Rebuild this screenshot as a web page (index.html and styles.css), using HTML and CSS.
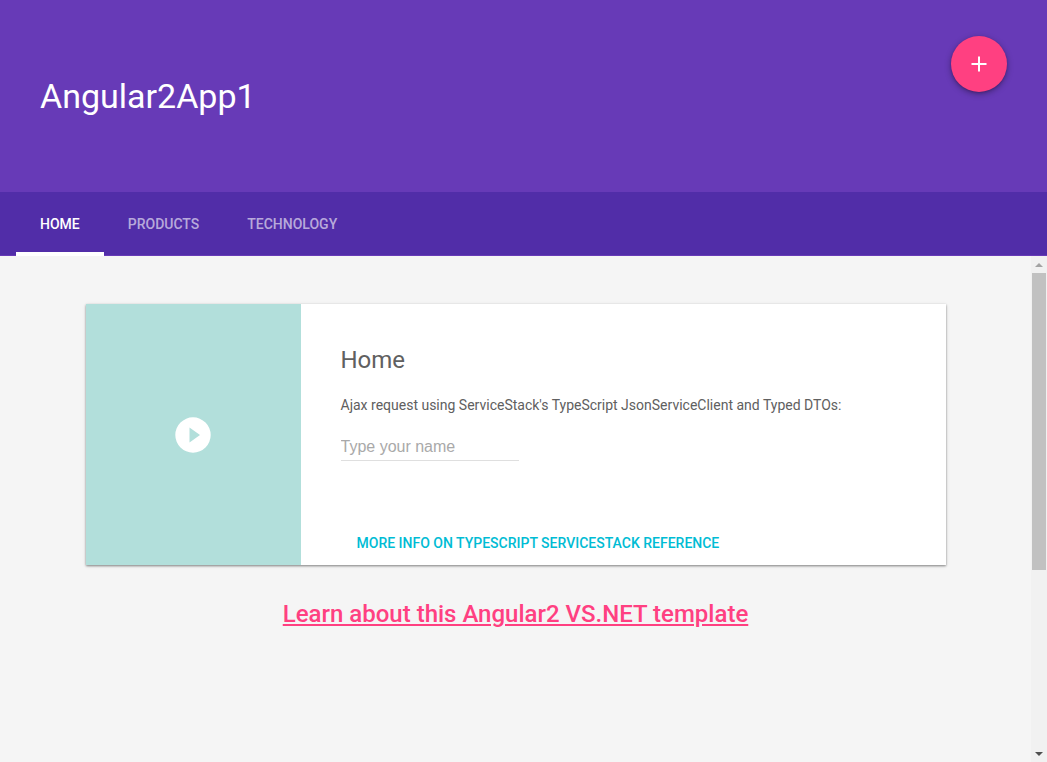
FILE: index.html
```html
<!DOCTYPE html>
<html lang="en">
<head>
<meta charset="utf-8">
<meta name="viewport" content="width=device-width, initial-scale=1">
<title>Angular2App1</title>
<link rel="stylesheet" href="styles.css">
</head>
<body>
<div class="layout">
  <header class="header">
    <h1 class="title">Angular2App1</h1>
    <button class="fab" type="button" aria-label="Add">
      <svg viewBox="0 0 24 24" width="24" height="24" aria-hidden="true"><path fill="currentColor" d="M19.500 13H13v6.500h-2V13H4.500v-2H11V4.500h2V11h6.500z"/></svg>
    </button>
  </header>
  <nav class="tabs">
    <a class="tab tab-active" href="#home">HOME</a>
    <a class="tab" href="#products">PRODUCTS</a>
    <a class="tab" href="#technology">TECHNOLOGY</a>
  </nav>
  <div class="viewport">
    <main class="content">
      <section class="card" id="home">
        <div class="media">
          <svg viewBox="0 0 36 36" width="36" height="36" aria-hidden="true"><path fill="#fff" fill-rule="evenodd" d="M18 0.300a17.700 17.700 0 1 0 0 35.400 17.700 17.700 0 0 0 0-35.400zM14.500 10.500v15l10.500-7.500z"/></svg>
        </div>
        <div class="body">
          <div class="text">
            <h2 class="heading">Home</h2>
            <p class="intro">Ajax request using ServiceStack's TypeScript JsonServiceClient and Typed DTOs:</p>
            <input class="name" type="text" placeholder="Type your name" aria-label="Type your name">
          </div>
          <div class="actions">
            <a class="action" href="#reference">MORE INFO ON TYPESCRIPT SERVICESTACK REFERENCE</a>
          </div>
        </div>
      </section>
      <a class="learn" href="#template">Learn about this Angular2 VS.NET template</a>
    </main>
    <div class="scrollbar" aria-hidden="true">
      <svg class="arrow" viewBox="0 0 16 17" width="16" height="17"><path fill="#a3a3a3" d="M4 11h8L8 7z"/></svg>
      <div class="track"><div class="thumb"></div></div>
      <svg class="arrow" viewBox="0 0 16 17" width="16" height="17"><path fill="#505050" d="M4 7h8l-4 4z"/></svg>
    </div>
  </div>
</div>
</body>
</html>
```
FILE: styles.css
```css
* {
  box-sizing: border-box;
}

body {
  margin: 0;
  font-family: Roboto, "Liberation Sans", sans-serif;
  font-size: 14px;
  color: #606060;
  background: #f5f5f5;
}

.layout {
  display: flex;
  flex-direction: column;
  height: 100vh;
}

.header {
  display: flex;
  align-items: center;
  justify-content: space-between;
  flex: none;
  min-height: 192px;
  padding: 36px 40px;
  background: #673ab7;
  color: #fff;
}

.title {
  margin: 0;
  font-size: 34px;
  line-height: 40px;
  font-weight: 400;
}

.fab {
  display: flex;
  align-items: center;
  justify-content: center;
  align-self: flex-start;
  width: 56px;
  height: 56px;
  padding: 0;
  border: 0;
  border-radius: 50%;
  background: #ff4081;
  color: #fff;
  box-shadow: 0 1px 2px rgba(0, 0, 0, .14), 0 2px 6px rgba(0, 0, 0, .36);
}

.tabs {
  display: flex;
  flex: none;
  height: 64px;
  padding-left: 16px;
  background: #512da8;
  border-bottom: 1px solid #673ab7;
}

.tab {
  position: relative;
  padding: 0 24px;
  line-height: 64px;
  font-weight: 500;
  color: rgba(255, 255, 255, .6);
  text-decoration: none;
}

.tab-active {
  color: #fff;
}

.tab-active::after {
  content: "";
  position: absolute;
  left: 0;
  right: 0;
  bottom: -1px;
  height: 4px;
  background: #fff;
}

.viewport {
  display: flex;
  flex: 1;
  min-height: 0;
}

.content {
  display: flex;
  flex-direction: column;
  align-items: center;
  flex: 1;
  padding: 48px 40px;
  overflow: hidden;
}

.card {
  display: flex;
  width: 100%;
  max-width: 860px;
  background: #fff;
  box-shadow: 0 1px 2px rgba(0, 0, 0, .4), 0 1px 4px rgba(0, 0, 0, .12);
}

.media {
  display: flex;
  align-items: center;
  justify-content: center;
  flex: 0 0 25%;
  background: #b2dfdb;
}

.body {
  flex: 1;
}

.text {
  padding: 40px 40px 16px;
}

.heading {
  margin: 0 0 17px;
  font-size: 24px;
  line-height: 32px;
  font-weight: 400;
}

.intro {
  margin: 0;
  line-height: 24px;
}

.name {
  display: block;
  width: 178px;
  height: 28px;
  margin: 16px 0 48px;
  padding: 0;
  border: 0;
  border-bottom: 1px solid #dfdfdf;
  background: none;
  font-family: "Liberation Sans", sans-serif;
  font-size: 16px;
  color: #606060;
}

.name::placeholder {
  color: #a9a9a9;
}

.actions {
  padding: 0 40px 4px;
}

.action {
  display: inline-block;
  padding: 0 16px;
  line-height: 36px;
  font-weight: 500;
  color: #00bcd4;
  text-decoration: none;
}

.learn {
  margin-top: 33px;
  font-size: 24px;
  line-height: 32px;
  font-weight: 500;
  color: #ff4081;
}

.scrollbar {
  display: flex;
  flex-direction: column;
  flex: none;
  width: 16px;
  background: #f1f1f1;
}

.arrow {
  flex: none;
}

.track {
  flex: 1;
}

.thumb {
  height: 63%;
  margin: 0 1px;
  background: #c1c1c1;
}
```
